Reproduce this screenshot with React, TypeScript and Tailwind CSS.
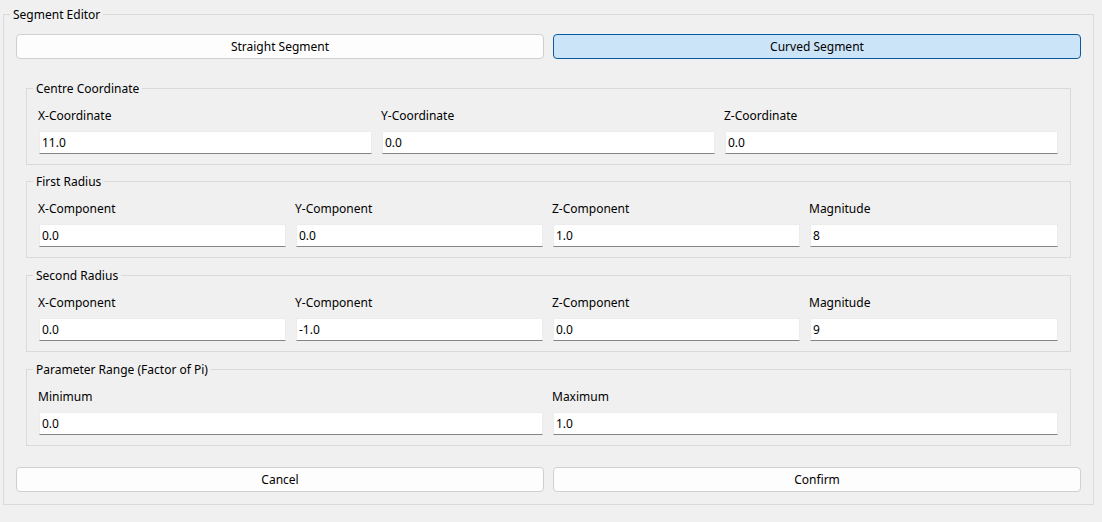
import React from "react";

const font = { fontFamily: '"Noto Sans", "Open Sans", sans-serif' };

function Field({ label, value }: { label: string; value: string }) {
  return (
    <div className="flex flex-col min-w-0">
      <div className="h-[16px] leading-[16px] text-[12px] text-black -ml-[1px]">{label}</div>
      <div className="mt-[7px] h-[23px] bg-white border border-[#ececec] border-b-[#858585] flex items-center pl-[2px] pt-[1px] text-[12px] text-black">
        {value}
      </div>
    </div>
  );
}

function Group({
  title,
  cols,
  fields,
  className,
}: {
  title: string;
  cols: string;
  fields: [string, string][];
  className?: string;
}) {
  return (
    <div className={`relative mx-[10px] h-[77px] border border-[#dadada] px-[12px] pt-[19px] pb-[10px] ${className ?? ""}`}>
      <div className="absolute left-[6px] -top-[8px] px-[3px] bg-[#f0f0f0] text-[12px] leading-[16px] text-black">{title}</div>
      <div className={`grid ${cols} gap-x-[10px]`}>
        {fields.map(([l, v]) => (
          <Field key={l} label={l} value={v} />
        ))}
      </div>
    </div>
  );
}

function Btn({ children, active }: { children: React.ReactNode; active?: boolean }) {
  return (
    <div
      className={`h-[25px] rounded-[4px] border flex items-center justify-center pt-[1px] text-[12px] text-black ${
        active ? "bg-[#cce4f7] border-[#0a5aa0]" : "bg-[#fdfdfd] border-[#d0d0d0]"
      }`}
    >
      {children}
    </div>
  );
}

export default function App() {
  return (
    <div className="w-[1102px] h-[522px] bg-[#f0f0f0] overflow-hidden pt-[14px] pl-[3px]" style={font}>
      <div className="relative w-[1091px] h-[491px] border border-[#dadada] px-[12px] pt-[19px]">
        <div className="absolute left-[6px] -top-[8px] px-[3px] bg-[#f0f0f0] text-[12px] leading-[16px] text-black">
          Segment Editor
        </div>
        <div className="grid grid-cols-[528px_528px] gap-x-[9px]">
          <Btn>Straight Segment</Btn>
          <Btn active>Curved Segment</Btn>
        </div>
        <Group
          className="mt-[29px]"
          title="Centre Coordinate"
          cols="grid-cols-3"
          fields={[
            ["X-Coordinate", "11.0"],
            ["Y-Coordinate", "0.0"],
            ["Z-Coordinate", "0.0"],
          ]}
        />
        <Group
          className="mt-[16px]"
          title="First Radius"
          cols="grid-cols-[247px_247px_247px_248px]"
          fields={[
            ["X-Component", "0.0"],
            ["Y-Component", "0.0"],
            ["Z-Component", "1.0"],
            ["Magnitude", "8"],
          ]}
        />
        <Group
          className="mt-[17px]"
          title="Second Radius"
          cols="grid-cols-[247px_247px_247px_248px]"
          fields={[
            ["X-Component", "0.0"],
            ["Y-Component", "-1.0"],
            ["Z-Component", "0.0"],
            ["Magnitude", "9"],
          ]}
        />
        <Group
          className="mt-[17px]"
          title="Parameter Range (Factor of Pi)"
          cols="grid-cols-[504px_505px]"
          fields={[
            ["Minimum", "0.0"],
            ["Maximum", "1.0"],
          ]}
        />
        <div className="grid grid-cols-[528px_528px] gap-x-[9px] mt-[21px]">
          <Btn>Cancel</Btn>
          <Btn>Confirm</Btn>
        </div>
      </div>
    </div>
  );
}
